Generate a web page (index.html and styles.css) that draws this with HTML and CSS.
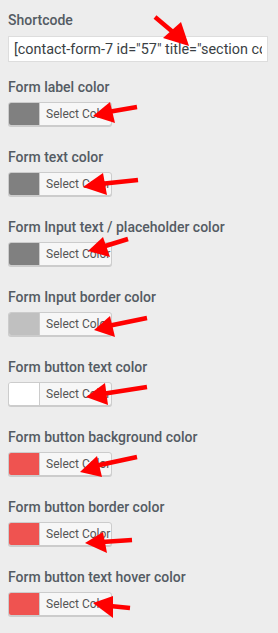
FILE: index.html
```html
<!DOCTYPE html>
<html lang="en">
<head>
    <meta charset="UTF-8">
    <meta name="viewport" content="width=device-width, initial-scale=1.0">
    <title>Form settings</title>
    <link rel="stylesheet" href="styles.css">
</head>
<body>

<div class="settings">
    <div class="field field--shortcode">
        <label class="field-label" for="shortcode">Shortcode</label>
        <input type="text" id="shortcode" class="shortcode-input" value="[contact-form-7 id=&quot;57&quot; title=&quot;section contact&quot;]" readonly>
    </div>

    <div class="field">
        <label class="field-label">Form label color</label>
        <button class="color-btn"><span class="swatch swatch--gray"></span><span class="color-btn__text">Select Color</span></button>
    </div>

    <div class="field">
        <label class="field-label">Form text color</label>
        <button class="color-btn"><span class="swatch swatch--gray"></span><span class="color-btn__text">Select Color</span></button>
    </div>

    <div class="field">
        <label class="field-label">Form Input text / placeholder color</label>
        <button class="color-btn"><span class="swatch swatch--gray"></span><span class="color-btn__text">Select Color</span></button>
    </div>

    <div class="field">
        <label class="field-label">Form Input border color</label>
        <button class="color-btn"><span class="swatch swatch--silver"></span><span class="color-btn__text">Select Color</span></button>
    </div>

    <div class="field">
        <label class="field-label">Form button text color</label>
        <button class="color-btn"><span class="swatch swatch--white"></span><span class="color-btn__text">Select Color</span></button>
    </div>

    <div class="field">
        <label class="field-label">Form button background color</label>
        <button class="color-btn"><span class="swatch swatch--red"></span><span class="color-btn__text">Select Color</span></button>
    </div>

    <div class="field">
        <label class="field-label">Form button border color</label>
        <button class="color-btn"><span class="swatch swatch--red"></span><span class="color-btn__text">Select Color</span></button>
    </div>

    <div class="field">
        <label class="field-label">Form button text hover color</label>
        <button class="color-btn"><span class="swatch swatch--red"></span><span class="color-btn__text">Select Color</span></button>
    </div>
</div>

<!-- annotation arrows drawn over the screenshot -->
<svg class="arrows" width="278" height="633" viewBox="0 0 278 633">
    <g stroke="#ff0000" stroke-width="4.5" stroke-linecap="butt" fill="#ff0000">
        <line x1="155" y1="17" x2="174" y2="33"/>
        <polygon points="189,46 181,22 163,38" stroke="none"/>

        <line x1="137" y1="107" x2="108" y2="112"/>
        <polygon points="93,116 110,102 115,123" stroke="none"/>

        <line x1="138" y1="180" x2="100" y2="184"/>
        <polygon points="83,187 103,173 107,195" stroke="none"/>

        <line x1="128" y1="239" x2="102" y2="247"/>
        <polygon points="88,251 103,237 110,257" stroke="none"/>

        <line x1="147" y1="318" x2="108" y2="326"/>
        <polygon points="94,330 110,316 115,337" stroke="none"/>

        <line x1="147" y1="387" x2="102" y2="394"/>
        <polygon points="86,397 105,383 108,405" stroke="none"/>

        <line x1="137" y1="457" x2="95" y2="466"/>
        <polygon points="80,472 97,456 102,477" stroke="none"/>

        <line x1="132" y1="540" x2="102" y2="542"/>
        <polygon points="85,543 103,532 107,553" stroke="none"/>

        <line x1="130" y1="608" x2="110" y2="606"/>
        <polygon points="93,603 113,596 113,618" stroke="none"/>
    </g>
</svg>

</body>
</html>
```

FILE: styles.css
```css
body {
    margin: 0;
    background-color: #ededed;
    font-family: Roboto, "Liberation Sans", sans-serif;
}
.settings {
    padding: 10px 8px 0 8px;
}
.field {
    margin-bottom: 21px;
}
.field--shortcode {
    margin-bottom: 15px;
}
.field-label {
    display: block;
    font-size: 14px;
    font-weight: 500;
    line-height: 20px;
    color: #545b63;
    margin-bottom: 5px;
}
.field--shortcode .field-label {
    margin-bottom: 6px;
}
.shortcode-input {
    display: block;
    box-sizing: border-box;
    width: 260px;
    height: 26px;
    margin: 0;
    padding: 0 5px;
    border: 1px solid #dddddd;
    border-radius: 0;
    background: #fff;
    font-family: Roboto, "Liberation Sans", sans-serif;
    font-size: 14.4px;
    color: #3a3f44;
    outline: none;
}
.color-btn {
    display: flex;
    align-items: stretch;
    box-sizing: border-box;
    width: 104px;
    height: 24px;
    margin: 0;
    padding: 0;
    border: 1px solid #cccccc;
    border-radius: 3px;
    background: #f7f7f7;
    box-shadow: 0 1px 0 #cccccc;
    overflow: hidden;
    cursor: pointer;
}
.swatch {
    width: 30px;
    flex-shrink: 0;
    border-right: 1px solid #cccccc;
}
.swatch--gray { background-color: #808080; }
.swatch--silver { background-color: #c0c0c0; }
.swatch--white { background-color: #ffffff; }
.swatch--red { background-color: #ef5350; }
.color-btn__text {
    padding-left: 6px;
    font-family: Roboto, "Liberation Sans", sans-serif;
    font-size: 12px;
    line-height: 22px;
    color: #555555;
    white-space: nowrap;
}
.arrows {
    position: absolute;
    top: 0;
    left: 0;
    pointer-events: none;
}
```
